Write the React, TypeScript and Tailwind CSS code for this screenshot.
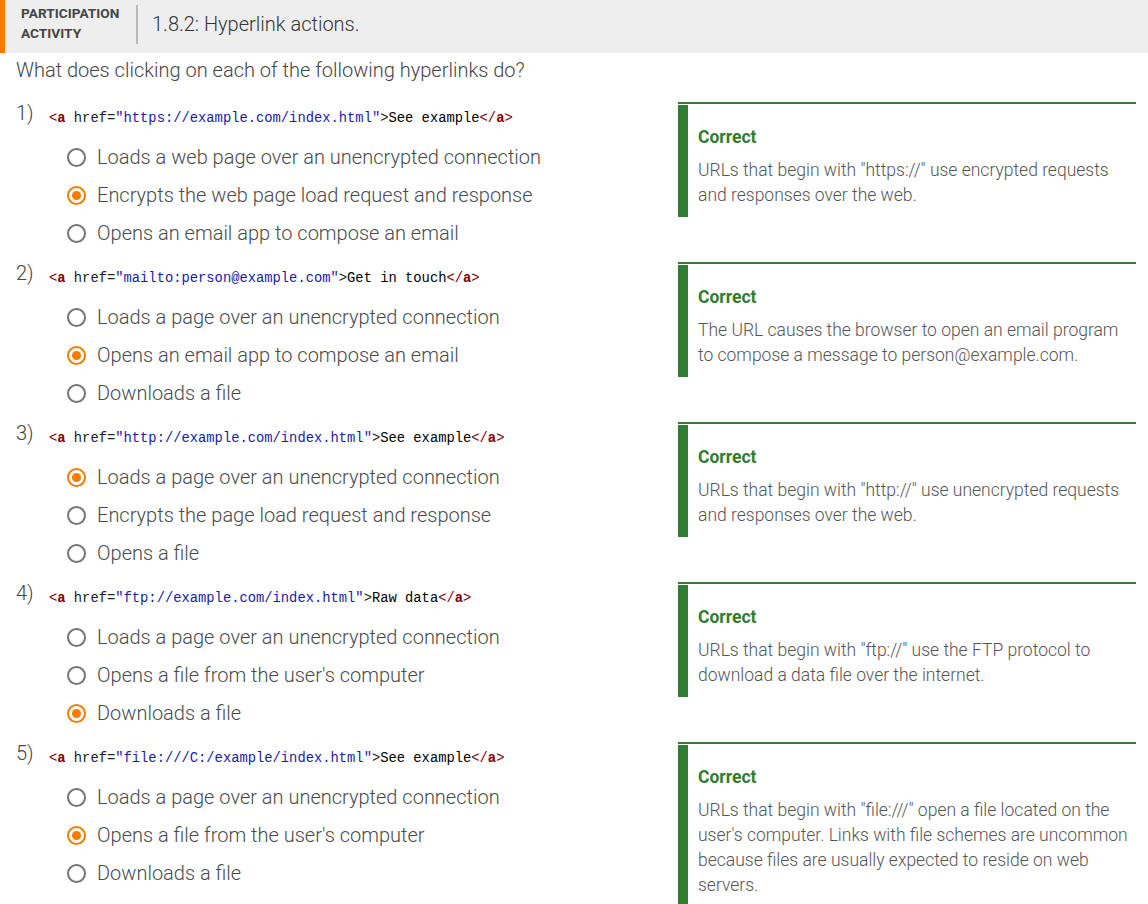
import React from 'react';

// code tokens for each hyperlink
type Q = {
  url: string;
  label: string;
  options: string[];
  picked: number;
  feedback: string;
};

const questions: Q[] = [
  {
    url: 'https://example.com/index.html',
    label: 'See example',
    options: [
      'Loads a web page over an unencrypted connection',
      'Encrypts the web page load request and response',
      'Opens an email app to compose an email',
    ],
    picked: 1,
    feedback: 'URLs that begin with "https://" use encrypted requests and responses over the web.',
  },
  {
    url: 'mailto:person@example.com',
    label: 'Get in touch',
    options: [
      'Loads a page over an unencrypted connection',
      'Opens an email app to compose an email',
      'Downloads a file',
    ],
    picked: 1,
    feedback: 'The URL causes the browser to open an email program to compose a message to person@example.com.',
  },
  {
    url: 'http://example.com/index.html',
    label: 'See example',
    options: [
      'Loads a page over an unencrypted connection',
      'Encrypts the page load request and response',
      'Opens a file',
    ],
    picked: 0,
    feedback: 'URLs that begin with "http://" use unencrypted requests and responses over the web.',
  },
  {
    url: 'ftp://example.com/index.html',
    label: 'Raw data',
    options: [
      'Loads a page over an unencrypted connection',
      "Opens a file from the user's computer",
      'Downloads a file',
    ],
    picked: 2,
    feedback: 'URLs that begin with "ftp://" use the FTP protocol to download a data file over the internet.',
  },
  {
    url: 'file:///C:/example/index.html',
    label: 'See example',
    options: [
      'Loads a page over an unencrypted connection',
      "Opens a file from the user's computer",
      'Downloads a file',
    ],
    picked: 1,
    feedback:
      'URLs that begin with "file:///" open a file located on the user\'s computer. Links with file schemes are uncommon because files are usually expected to reside on web servers.',
  },
];

export default function App() {
  return (
    <div className="min-h-[904px] bg-white font-['Roboto','Liberation_Sans',sans-serif] text-[#555]">
      {/* header */}
      <div className="h-[53px] bg-[#eeeeee] border-l-[5px] border-[#f57c00] flex items-center">
        <div className="pl-[16px] w-[131px] text-[13.7px] leading-[20px] font-bold text-[#444] -mt-[7px]">
          PARTICIPATION
          <br />
          ACTIVITY
        </div>
        <div className="w-[2px] h-[39px] bg-[#b8b8b8] -mt-[5px]" />
        <div className="pl-[14px] text-[20px] font-light text-[#333] -mt-[5px]">1.8.2: Hyperlink actions.</div>
      </div>

      <p className="pl-[16px] pt-[5px] text-[20px] leading-[24px] font-light text-[#444] mb-[20px]">
        What does clicking on each of the following hyperlinks do?
      </p>

      {questions.map((q, i) => (
        <div key={i} className="flex items-start">
          <div className="flex-1 pl-[16px] pb-[10px]">
            <div className="flex items-start h-[36px]">
              <span className="w-[33px] text-[20px] leading-[22px] font-light text-[#444]">{i + 1})</span>
              <Code url={q.url} label={q.label} />
            </div>
            {q.options.map((o, j) => (
              <div key={j} className="flex items-center h-[38px] pl-[51px] gap-[11px]">
                <Radio on={j === q.picked} />
                <span className="text-[20px] font-light text-[#4a4a4a]">{o}</span>
              </div>
            ))}
          </div>
          <div className="w-[458px] mr-[12px] border-t-2 border-[#2e7d32]">
            <div className="mt-[1px] border-l-[10px] border-[#2e7d32] pl-[10px] pt-[20px] pb-[9px]">
              <p className="text-[17.5px] leading-[24px] font-bold text-[#2e7d32]">Correct</p>
              <p className="mt-[9px] text-[17.5px] leading-[25px] font-light text-[#555]">{q.feedback}</p>
            </div>
          </div>
        </div>
      ))}
    </div>
  );
}

function Code({ url, label }: { url: string; label: string }) {
  return (
    <code className="mt-[8px] font-['Liberation_Mono','DejaVu_Sans_Mono',monospace] text-[13.8px] leading-[18px] text-[#000] whitespace-pre">
      <span className="text-[#800000]">&lt;</span>
      <span className="text-[#800000] font-bold">a</span> <span className="text-[#222]">href=</span>
      <span className="text-[#1a1aa6]">"{url}"</span>
      <span className="text-[#222]">&gt;</span>
      {label}
      <span className="text-[#800000]">&lt;/</span>
      <span className="text-[#800000] font-bold">a</span>
      <span className="text-[#800000]">&gt;</span>
    </code>
  );
}

function Radio({ on }: { on: boolean }) {
  return on ? (
    <span className="w-[19px] h-[19px] rounded-full border-2 border-[#f57c00] flex items-center justify-center shrink-0">
      <span className="w-[9px] h-[9px] rounded-full bg-[#f57c00]" />
    </span>
  ) : (
    <span className="w-[19px] h-[19px] rounded-full border-2 border-[#757575] shrink-0" />
  );
}
